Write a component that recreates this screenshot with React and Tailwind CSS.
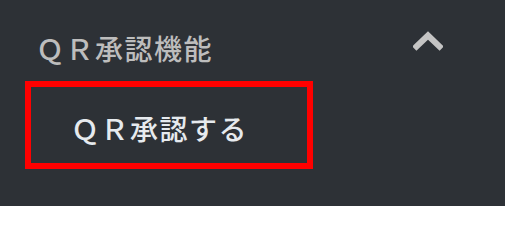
import React from "react";

function Chevron() {
  return (
    <svg width="30" height="20" viewBox="0 0 30 20" className="block">
      <path d="M3.5 15.5 L15 4.5 L26.5 15.5" fill="none" stroke="#c4c4c4" strokeWidth="6" strokeLinecap="square" />
    </svg>
  );
}

export default function App() {
  return (
    <div
      className="w-[505px] h-[206px] bg-[#2d3136] flex flex-col pt-[31px]"
      style={{ fontFamily: '"Noto Sans CJK JP", "Noto Sans", sans-serif' }}
    >
      <div className="flex items-start justify-between pl-[36px] pr-[62px]">
        <span className="text-[28px] leading-[34px] tracking-[1.5px] font-medium text-[#bdbdbd]">ＱＲ承認機能</span>
        <div>
          <Chevron />
        </div>
      </div>
      <div className="mt-[16px] ml-[25px] w-[288px] h-[88px] border-[6px] border-[#ff0000] flex items-center pl-[40px] pt-[5px]">
        <span className="text-[28px] leading-[34px] tracking-[1.5px] font-medium text-[#e6eaee]">ＱＲ承認する</span>
      </div>
    </div>
  );
}
